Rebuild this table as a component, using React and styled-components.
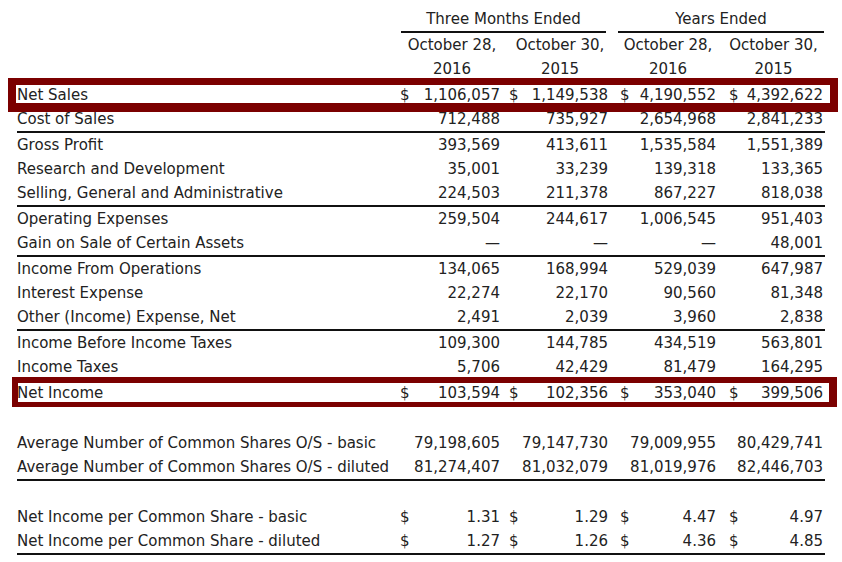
import React from "react";
import styled, { createGlobalStyle, css } from "styled-components";

const GlobalStyle = createGlobalStyle`
  html, body {
    margin: 0;
    background: #ffffff;
  }
  body {
    font-family: "DejaVu Sans", Verdana, sans-serif;
    font-size: 15px;
    color: #222222;
  }
`;

const BOX_RED = "#7b0000";

// $ sign offset and right padding per data column
const DOLLAR_LEFT = [2, 3, 6, 7];
const PAD_RIGHT = [6, 6, 6, 2];

const Page = styled.div`
  width: 842px;
  height: 562px;
  padding: 7px 0 0 17px;
  box-sizing: border-box;
  overflow: hidden;
`;

const Table = styled.div`
  width: 808px;
  display: flex;
  flex-direction: column;
`;

const boxStyles = {
  sales: css`
    top: -5px;
    bottom: -5px;
    left: -9px;
    right: -13px;
    border-width: 7px 8px 9px 8px;
  `,
  income: css`
    top: -4px;
    bottom: -2px;
    left: -5px;
    right: -12px;
    border-width: 6px 8px 5px 6px;
  `,
};

const Row = styled.div`
  position: relative;
  display: grid;
  grid-template-columns: 381px 108px 108px 108px 103px;
  min-height: 24px;
  line-height: 24px;
  border-bottom: ${(p) => (p.$rule ? "2px solid #111" : "none")};

  ${(p) =>
    p.$box &&
    css`
      &::after {
        content: "";
        position: absolute;
        border-style: solid;
        border-color: ${BOX_RED};
        pointer-events: none;
        ${boxStyles[p.$box]}
      }
    `}
`;

const Label = styled.div`
  white-space: nowrap;
`;

const GroupCell = styled.div`
  grid-column: span 2;
  text-align: center;
  margin: ${(p) => p.$margin};
  border-bottom: 2px solid #111;
`;

const HeadCell = styled.div`
  text-align: center;
  white-space: nowrap;
`;

const NumCell = styled.div`
  display: flex;
  justify-content: space-between;
  white-space: nowrap;
  padding-left: ${(p) => DOLLAR_LEFT[p.$col]}px;
  padding-right: ${(p) => PAD_RIGHT[p.$col]}px;
`;

const Spacer = styled.div`
  height: 24px;
`;

const rows = [
  { label: "Net Sales", vals: ["1,106,057", "1,149,538", "4,190,552", "4,392,622"], dollar: true, box: "sales" },
  { label: "Cost of Sales", vals: ["712,488", "735,927", "2,654,968", "2,841,233"], rule: true },
  { label: "Gross Profit", vals: ["393,569", "413,611", "1,535,584", "1,551,389"] },
  { label: "Research and Development", vals: ["35,001", "33,239", "139,318", "133,365"] },
  { label: "Selling, General and Administrative", vals: ["224,503", "211,378", "867,227", "818,038"], rule: true },
  { label: "Operating Expenses", vals: ["259,504", "244,617", "1,006,545", "951,403"] },
  { label: "Gain on Sale of Certain Assets", vals: ["—", "—", "—", "48,001"], rule: true },
  { label: "Income From Operations", vals: ["134,065", "168,994", "529,039", "647,987"] },
  { label: "Interest Expense", vals: ["22,274", "22,170", "90,560", "81,348"] },
  { label: "Other (Income) Expense, Net", vals: ["2,491", "2,039", "3,960", "2,838"], rule: true },
  { label: "Income Before Income Taxes", vals: ["109,300", "144,785", "434,519", "563,801"] },
  { label: "Income Taxes", vals: ["5,706", "42,429", "81,479", "164,295"], rule: true },
  { label: "Net Income", vals: ["103,594", "102,356", "353,040", "399,506"], dollar: true, rule: true, box: "income" },
  { spacer: true },
  { label: "Average Number of Common Shares O/S - basic", vals: ["79,198,605", "79,147,730", "79,009,955", "80,429,741"] },
  { label: "Average Number of Common Shares O/S - diluted", vals: ["81,274,407", "81,032,079", "81,019,976", "82,446,703"], rule: true },
  { spacer: true },
  { label: "Net Income per Common Share - basic", vals: ["1.31", "1.29", "4.47", "4.97"], dollar: true },
  { label: "Net Income per Common Share - diluted", vals: ["1.27", "1.26", "4.36", "4.85"], dollar: true, rule: true },
];

const App = () => {
  return (
    <Page>
      <GlobalStyle />
      <Table>
        <Row>
          <Label />
          <GroupCell $margin="0 8px 0 3px">Three Months Ended</GroupCell>
          <GroupCell $margin="0 1px 0 4px">Years Ended</GroupCell>
        </Row>
        <Row>
          <Label />
          <HeadCell>October 28,</HeadCell>
          <HeadCell>October 30,</HeadCell>
          <HeadCell>October 28,</HeadCell>
          <HeadCell>October 30,</HeadCell>
        </Row>
        <Row $rule>
          <Label />
          <HeadCell>2016</HeadCell>
          <HeadCell>2015</HeadCell>
          <HeadCell>2016</HeadCell>
          <HeadCell>2015</HeadCell>
        </Row>
        {rows.map((r, i) =>
          r.spacer ? (
            <Spacer key={i} />
          ) : (
            <Row key={i} $rule={r.rule} $box={r.box}>
              <Label>{r.label}</Label>
              {r.vals.map((v, c) => (
                <NumCell key={c} $col={c}>
                  <span>{r.dollar ? "$" : ""}</span>
                  <span>{v}</span>
                </NumCell>
              ))}
            </Row>
          )
        )}
      </Table>
    </Page>
  );
};

export default App;
